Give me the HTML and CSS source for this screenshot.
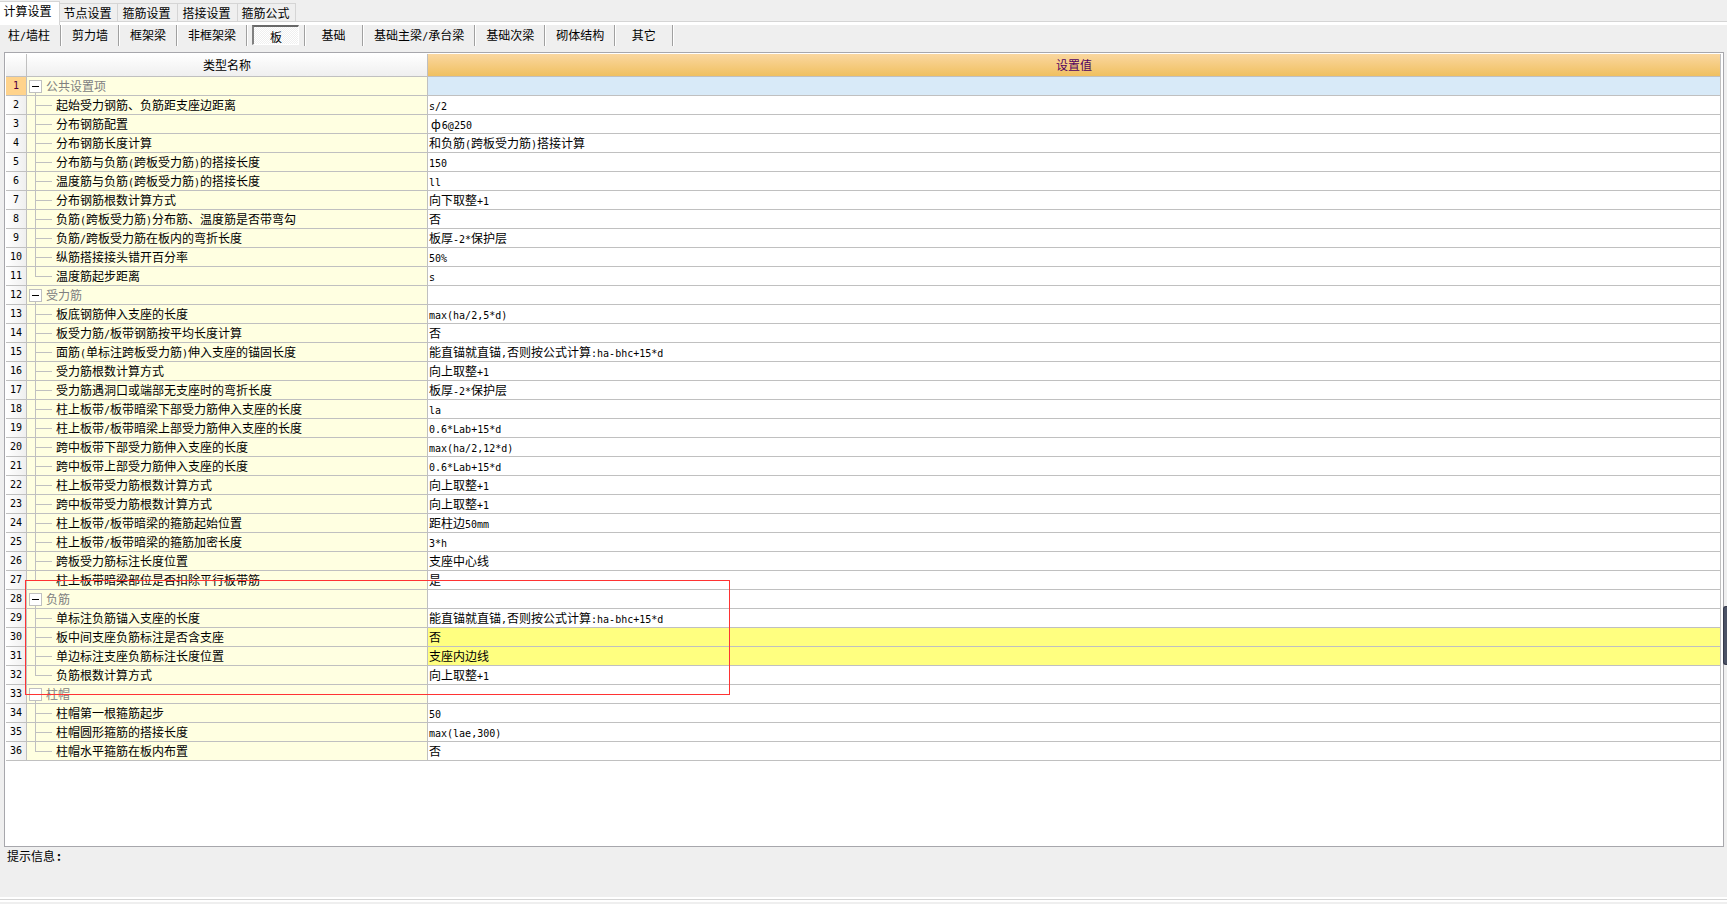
FILE: index.html
```
<!DOCTYPE html>
<html lang="zh-CN">
<head>
<meta charset="utf-8">
<title>计算设置</title>
<link rel="stylesheet" href="styles.css">
</head>
<body>
<nav class="tabs">
<button class="tab tab-active">计算设置</button>
<button class="tab">节点设置</button>
<button class="tab">箍筋设置</button>
<button class="tab">搭接设置</button>
<button class="tab">箍筋公式</button>
</nav>
<div class="toolbar">
<div class="tool tool-first"><button>柱<span class="m">/</span>墙柱</button></div>
<div class="tool"><button>剪力墙</button></div>
<div class="tool"><button>框架梁</button></div>
<div class="tool"><button>非框架梁</button></div>
<div class="tool tool-short"><button class="pressed">板</button></div>
<div class="tool tool-short"><button>基础</button></div>
<div class="tool"><button>基础主梁<span class="m">/</span>承台梁</button></div>
<div class="tool"><button>基础次梁</button></div>
<div class="tool"><button>砌体结构</button></div>
<div class="tool tool-short"><button>其它</button></div>
</div>
<main class="frame">
<table class="grid">
<colgroup><col class="col-num"><col class="col-name"><col></colgroup>
<thead><tr><th></th><th>类型名称</th><th class="current">设置值</th></tr></thead>
<tbody>
<tr class="group selected"><th>1</th><td><button class="fold" aria-label="折叠"></button>公共设置项</td><td></td></tr>
<tr><th>2</th><td>起始受力钢筋、负筋距支座边距离</td><td><span class="m">s/2</span></td></tr>
<tr><th>3</th><td>分布钢筋配置</td><td><span class="phi">ф</span><span class="m">6@250</span></td></tr>
<tr><th>4</th><td>分布钢筋长度计算</td><td>和负筋<span class="m">(</span>跨板受力筋<span class="m">)</span>搭接计算</td></tr>
<tr><th>5</th><td>分布筋与负筋<span class="m">(</span>跨板受力筋<span class="m">)</span>的搭接长度</td><td><span class="m">150</span></td></tr>
<tr><th>6</th><td>温度筋与负筋<span class="m">(</span>跨板受力筋<span class="m">)</span>的搭接长度</td><td><span class="m">ll</span></td></tr>
<tr><th>7</th><td>分布钢筋根数计算方式</td><td>向下取整<span class="m">+1</span></td></tr>
<tr><th>8</th><td>负筋<span class="m">(</span>跨板受力筋<span class="m">)</span>分布筋、温度筋是否带弯勾</td><td>否</td></tr>
<tr><th>9</th><td>负筋<span class="m">/</span>跨板受力筋在板内的弯折长度</td><td>板厚<span class="m">-2*</span>保护层</td></tr>
<tr><th>10</th><td>纵筋搭接接头错开百分率</td><td><span class="m">50%</span></td></tr>
<tr class="last"><th>11</th><td>温度筋起步距离</td><td><span class="m">s</span></td></tr>
<tr class="group"><th>12</th><td><button class="fold" aria-label="折叠"></button>受力筋</td><td></td></tr>
<tr><th>13</th><td>板底钢筋伸入支座的长度</td><td><span class="m">max(ha/2,5*d)</span></td></tr>
<tr><th>14</th><td>板受力筋<span class="m">/</span>板带钢筋按平均长度计算</td><td>否</td></tr>
<tr><th>15</th><td>面筋<span class="m">(</span>单标注跨板受力筋<span class="m">)</span>伸入支座的锚固长度</td><td>能直锚就直锚<span class="m">,</span>否则按公式计算<span class="m">:ha-bhc+15*d</span></td></tr>
<tr><th>16</th><td>受力筋根数计算方式</td><td>向上取整<span class="m">+1</span></td></tr>
<tr><th>17</th><td>受力筋遇洞口或端部无支座时的弯折长度</td><td>板厚<span class="m">-2*</span>保护层</td></tr>
<tr><th>18</th><td>柱上板带<span class="m">/</span>板带暗梁下部受力筋伸入支座的长度</td><td><span class="m">la</span></td></tr>
<tr><th>19</th><td>柱上板带<span class="m">/</span>板带暗梁上部受力筋伸入支座的长度</td><td><span class="m">0.6*Lab+15*d</span></td></tr>
<tr><th>20</th><td>跨中板带下部受力筋伸入支座的长度</td><td><span class="m">max(ha/2,12*d)</span></td></tr>
<tr><th>21</th><td>跨中板带上部受力筋伸入支座的长度</td><td><span class="m">0.6*Lab+15*d</span></td></tr>
<tr><th>22</th><td>柱上板带受力筋根数计算方式</td><td>向上取整<span class="m">+1</span></td></tr>
<tr><th>23</th><td>跨中板带受力筋根数计算方式</td><td>向上取整<span class="m">+1</span></td></tr>
<tr><th>24</th><td>柱上板带<span class="m">/</span>板带暗梁的箍筋起始位置</td><td>距柱边<span class="m">50mm</span></td></tr>
<tr><th>25</th><td>柱上板带<span class="m">/</span>板带暗梁的箍筋加密长度</td><td><span class="m">3*h</span></td></tr>
<tr><th>26</th><td>跨板受力筋标注长度位置</td><td>支座中心线</td></tr>
<tr class="last"><th>27</th><td>柱上板带暗梁部位是否扣除平行板带筋</td><td>是</td></tr>
<tr class="group"><th>28</th><td><button class="fold" aria-label="折叠"></button>负筋</td><td></td></tr>
<tr><th>29</th><td>单标注负筋锚入支座的长度</td><td>能直锚就直锚<span class="m">,</span>否则按公式计算<span class="m">:ha-bhc+15*d</span></td></tr>
<tr class="changed"><th>30</th><td>板中间支座负筋标注是否含支座</td><td>否</td></tr>
<tr class="changed"><th>31</th><td>单边标注支座负筋标注长度位置</td><td>支座内边线</td></tr>
<tr class="last"><th>32</th><td>负筋根数计算方式</td><td>向上取整<span class="m">+1</span></td></tr>
<tr class="group"><th>33</th><td><button class="fold" aria-label="折叠"></button>柱帽</td><td></td></tr>
<tr><th>34</th><td>柱帽第一根箍筋起步</td><td><span class="m">50</span></td></tr>
<tr><th>35</th><td>柱帽圆形箍筋的搭接长度</td><td><span class="m">max(lae,300)</span></td></tr>
<tr class="last"><th>36</th><td>柱帽水平箍筋在板内布置</td><td>否</td></tr>
</tbody>
</table>
<div class="marker"></div>
</main>
<footer class="hint">提示信息<span class="colon">:</span></footer>
<div class="bottom-edge"></div>
<div class="side-handle"></div>
</body>
</html>
```
FILE: styles.css
```
* { box-sizing: border-box; }

body {
  margin: 0;
  min-height: 100vh;
  display: flex;
  flex-direction: column;
  position: relative;
  overflow-x: hidden;
  background: #efefef;
  color: #000;
  font: 12px/18px "Noto Sans CJK SC", sans-serif;
}

button {
  margin: 0;
  padding: 0;
  border: 0;
  background: none;
  color: inherit;
  font: inherit;
  white-space: nowrap;
}

.m {
  font-family: "DejaVu Sans Mono", monospace;
  font-size: 10px;
  line-height: 12px;
}

/* Top tabs */
.tabs {
  display: flex;
  align-items: flex-end;
  height: 25px;
  padding-top: 1px;
  background: linear-gradient(#efefef 21px, #d5d5d5 21px, #d5d5d5 22px, #fff 22px);
}
.tab {
  height: 19px;
  width: 60px;
  margin-bottom: 3px;
  padding: 0 2px 2px 0;
  border: 1px solid #d5d5d5;
  border-left: 0;
}
.tab-active {
  height: 24px;
  margin-bottom: 0;
  padding: 0 4px 5px 0;
  border-bottom: 0;
  background: #fff;
}
.tab:nth-child(2), .tab:last-child { width: 58px; }

/* Component toolbar */
.toolbar {
  display: flex;
  height: 27px;
  padding-bottom: 6px;
}
.tool {
  display: flex;
  justify-content: center;
  padding: 0 10px 0 11px;
  border-right: 1px solid #a0a0a0;
  box-shadow: 1px 0 #fff;
}
.tool button { padding-bottom: 2px; min-width: 36px; }
.tool-first { padding: 0 10px 0 8px; }
.tool-short { padding: 0 5px; }
.tool-short button { width: 47px; }
.tool .pressed {
  height: 20px;
  padding: 1px 0 0;
  border: 1px solid #fff;
  border-top: 2px solid #696969;
  border-left: 2px solid #808080;
  background: repeating-conic-gradient(#fff 0 25%, #efefef 0 50%) 0 0 / 2px 2px;
}

/* Settings grid */
.frame {
  flex: 1;
  position: relative;
  margin: 0 3px 0 4px;
  padding: 1px 2px 0 1px;
  border: 1px solid #a7a7ac;
  background: #fff;
}
.grid {
  width: 100%;
  table-layout: fixed;
  border-spacing: 0;
}
.col-num { width: 21px; }
.col-name { width: 401px; }
.grid th, .grid td {
  height: 19px;
  padding: 0;
  border-right: 1px solid #c0c0c0;
  border-bottom: 1px solid #c0c0c0;
  font-weight: normal;
  text-align: left;
  white-space: nowrap;
  overflow: hidden;
}
.grid thead th {
  height: 23px;
  text-align: center;
  background: linear-gradient(#fff, #efefef);
}
.grid thead .current {
  background: linear-gradient(#fad7a0, #f0c060);
  color: #500060;
}
.grid tbody th {
  font-family: "DejaVu Sans Mono", monospace;
  font-size: 10px;
  text-align: center;
  background: linear-gradient(90deg, #fff, #efefef);
}
.grid td { padding-left: 1px; }

/* Tree column: trunk and branch lines */
.grid th + td {
  padding-left: 29px;
  background:
    linear-gradient(#c0c0c0, #c0c0c0) 8px 0 / 1px 100% no-repeat,
    linear-gradient(#c0c0c0, #c0c0c0) 8px 9px / 17px 1px no-repeat,
    #ffffe1;
}
.grid .last th + td {
  background:
    linear-gradient(#c0c0c0, #c0c0c0) 8px 0 / 1px 9px no-repeat,
    linear-gradient(#c0c0c0, #c0c0c0) 8px 9px / 17px 1px no-repeat,
    #ffffe1;
}
.grid .group th + td {
  padding-left: 2px;
  color: #808080;
  background:
    linear-gradient(#c0c0c0, #c0c0c0) 8px 100% / 1px 3px no-repeat,
    #ffffe1;
}
.fold {
  width: 13px;
  height: 13px;
  margin: 3px 4px 0 0;
  border: 1px solid #c0c0c0;
  vertical-align: top;
  background: linear-gradient(#000, #000) center / 7px 1px no-repeat #fff;
}
.grid .selected th { background: #ffd38c; color: #500040; }
.grid .selected td:last-child { background: #d8eaf8; }
.grid .changed td:last-child { background: #ffff80; }
.phi { margin: 0 1px 0 2px; line-height: 12px; }

/* Annotation rectangle over rows 27 to 33 */
.marker {
  position: absolute;
  left: 20px;
  top: 527px;
  width: 705px;
  height: 115px;
  border: 1px solid #ff3333;
  pointer-events: none;
}

.hint { height: 50px; padding-left: 7px; }
.colon { margin-left: 2px; font-weight: bold; }
.bottom-edge {
  height: 7px;
  background: linear-gradient(#fff 2px, #d5d5d5 2px, #d5d5d5 3px, #fff 3px, #fff 5px, #efefef 5px);
}
.side-handle {
  position: absolute;
  right: 0;
  top: 606px;
  width: 4px;
  height: 59px;
  border: 1px solid #34384a;
  border-right: 0;
  border-radius: 3px 0 0 3px;
  background: #4c5366;
}
```
